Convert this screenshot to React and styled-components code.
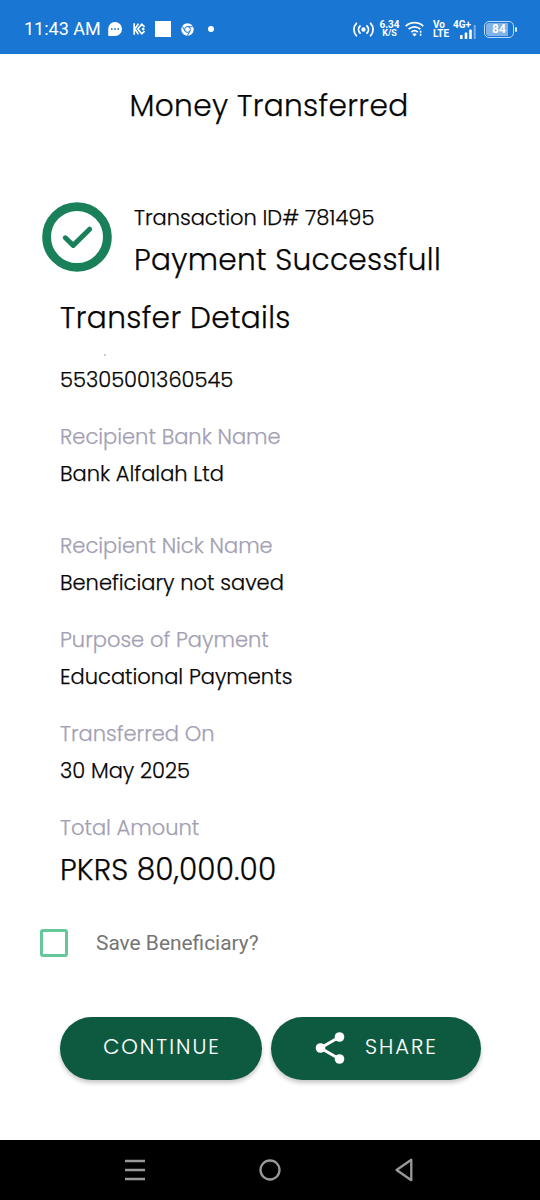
import React from "react";
import styled, { createGlobalStyle } from "styled-components";

const fields = [
  { label: "Recipient Bank Name", value: "Bank Alfalah Ltd", gap: 36 },
  { label: "Recipient Nick Name", value: "Beneficiary not saved", gap: 21 },
  { label: "Purpose of Payment", value: "Educational Payments", gap: 21 },
  { label: "Transferred On", value: "30 May 2025", gap: 21 },
];

const StatusBar = () => (
  <StatusWrapper>
    <StatusLeft>
      <Clock>11:43 AM</Clock>
      <svg width="14" height="14" viewBox="0 0 14 14">
        <path d="M7 0a7 7 0 1 1 0 14H1.2a1 1 0 0 1-1-1V7A7 7 0 0 1 7 0z" fill="#fff" />
        <g fill="#1976d2">
          <circle cx="3.8" cy="7" r="0.9" />
          <circle cx="7" cy="7" r="0.9" />
          <circle cx="10.2" cy="7" r="0.9" />
        </g>
      </svg>
      <svg width="13" height="14" viewBox="0 0 13 14" fill="none" stroke="#fff" strokeWidth="1.7">
        <path d="M1.2 1.2v11.6M5.4 1.6L2.2 6.6M2.2 7.4l3.2 5M11.6 4.8L8.8 2.2 4.8 7l4 4.8 2.8-2.6" />
        <path d="M10.2 5.3L11.9 7l-1.7 1.7L8.5 7z" fill="#fff" stroke="none" />
      </svg>
      <Square />
      <svg width="13" height="13" viewBox="0 0 13 13">
        <circle cx="6.5" cy="6.5" r="6.2" fill="#fff" />
        <circle cx="6.5" cy="6.5" r="2.9" fill="none" stroke="#1976d2" strokeWidth="1" />
        <path d="M6.5 3.6h5.4M4 8L1.3 3.4M9 8l-2.6 4.6" stroke="#1976d2" strokeWidth="0.9" />
      </svg>
      <Bullet />
    </StatusLeft>
    <StatusRight>
      <svg width="21" height="15" viewBox="0 0 21 15" fill="none" stroke="#fff" strokeWidth="1.8" strokeLinecap="round">
        <circle cx="10.5" cy="7.5" r="1.3" fill="#fff" />
        <path d="M7 4a5 5 0 0 0 0 7M14 4a5 5 0 0 1 0 7M3.4 1.3a9 9 0 0 0 0 12.4M17.6 1.3a9 9 0 0 1 0 12.4" />
      </svg>
      <Stacked $left={5} $width={21}>
        <span>6.34</span>
        <small>K/S</small>
      </Stacked>
      <Wifi width="19" height="16" viewBox="0 0 19 16" fill="none" stroke="#fff" strokeWidth="1.8">
        <path d="M0.8 5.1a12.6 12.6 0 0 1 17.4 0M3.6 8.2a8.6 8.6 0 0 1 11.8 0M6.3 11.1a4.8 4.8 0 0 1 6.4 0" />
        <path d="M9.5 15.6l-2.2-2.3a3.2 3.2 0 0 1 4.4 0z" fill="#fff" stroke="none" />
        <path d="M15.6 9.8v5.8" strokeWidth="1.6" strokeDasharray="2 1" />
      </Wifi>
      <Stacked $left={9} $width={16} $align="left">
        <span>Vo</span>
        <span>LTE</span>
      </Stacked>
      <Signal>
        <span>4G+</span>
        <svg width="17" height="15" viewBox="0 0 17 15" fill="#fff">
          <rect x="0" y="11" width="2.6" height="4" rx="0.6" />
          <rect x="4.7" y="8.5" width="2.6" height="6.5" rx="0.6" />
          <rect x="9.2" y="5.5" width="2.6" height="9.5" rx="0.6" />
          <rect x="13.6" y="1" width="2.2" height="14" rx="0.6" opacity="0.4" />
        </svg>
      </Signal>
      <Battery>
        <Charge>84</Charge>
      </Battery>
      <BatteryTip />
    </StatusRight>
  </StatusWrapper>
);

const SuccessIcon = () => (
  <svg width="70" height="70" viewBox="0 0 70 70" fill="none" stroke="#198059">
    <circle cx="35" cy="35" r="30.4" strokeWidth="8.8" />
    <path d="M23.3 35.8l7.9 7.6 16.4-16.2" strokeWidth="5" strokeLinecap="round" strokeLinejoin="round" />
  </svg>
);

const ShareIcon = () => (
  <svg width="30" height="32" viewBox="0 0 30 32">
    <path d="M24.5 5L5.5 16l19 11" fill="none" stroke="#fff" strokeWidth="3" />
    <g fill="#fff">
      <circle cx="24.5" cy="5" r="4.8" />
      <circle cx="5.5" cy="16" r="4.8" />
      <circle cx="24.5" cy="27" r="4.8" />
    </g>
  </svg>
);

const App = () => {
  return (
    <Screen>
      <GlobalStyle />
      <StatusBar />
      <Title>Money Transferred</Title>
      <Result>
        <SuccessIcon />
        <div>
          <TransactionId>Transaction ID# 781495</TransactionId>
          <ResultText>Payment Successfull</ResultText>
        </div>
      </Result>
      <Details>
        <SectionTitle>Transfer Details</SectionTitle>
        <Speck />
        <Account>55305001360545</Account>
        {fields.map(({ label, value, gap }) => (
          <Field key={label} $gap={gap}>
            <Label>{label}</Label>
            <Value>{value}</Value>
          </Field>
        ))}
        <Label>Total Amount</Label>
        <Amount>PKRS 80,000.00</Amount>
      </Details>
      <SaveRow>
        <CheckBox type="checkbox" />
        Save Beneficiary?
      </SaveRow>
      <Actions>
        <PillButton $width={202}>CONTINUE</PillButton>
        <PillButton $width={210}>
          <ShareIcon />
          SHARE
        </PillButton>
      </Actions>
      <NavBar>
        <svg width="20" height="22" viewBox="0 0 20 22" stroke="#999" strokeWidth="2.6">
          <path d="M0 2h20M0 11h20M0 20h20" />
        </svg>
        <svg width="22" height="22" viewBox="0 0 22 22" fill="none" stroke="#999" strokeWidth="2.3">
          <circle cx="11" cy="11" r="9.5" />
        </svg>
        <svg width="18" height="24" viewBox="0 0 18 24" fill="none" stroke="#999" strokeWidth="2.3" strokeLinejoin="round">
          <path d="M16.3 1.8v20.4L1.6 12z" />
        </svg>
      </NavBar>
    </Screen>
  );
};

const GlobalStyle = createGlobalStyle`
  * {
    box-sizing: border-box;
  }

  body {
    margin: 0;
    background: #fff;
  }

  svg {
    display: block;
    flex-shrink: 0;
  }
`;

const Screen = styled.div`
  display: flex;
  flex-direction: column;
  width: 540px;
  height: 1200px;
  background: #fff;
  color: #050505;
  font-family: Poppins, Inter, sans-serif;
  font-size: 21px;
  font-weight: 300;
  white-space: nowrap;
  -webkit-text-stroke: 0.25px;
`;

const StatusWrapper = styled.header`
  display: flex;
  justify-content: space-between;
  height: 54px;
  padding: 4px 24px 0;
  background: #1976d2;
  color: #fff;
  font-family: Roboto, sans-serif;
  font-weight: 400;
  -webkit-text-stroke: 0;
`;

const StatusLeft = styled.div`
  display: flex;
  align-items: center;
`;

const Clock = styled.span`
  width: 84px;
  font-size: 18px;
  line-height: 22px;

  & + svg + svg {
    margin-left: 11px;
  }
`;

const Square = styled.span`
  width: 16px;
  height: 16px;
  margin: 0 10px 0 9px;
  background: #fff;
`;

const Bullet = styled.span`
  width: 6px;
  height: 6px;
  margin-left: 14px;
  border-radius: 50%;
  background: #fff;
`;

const StatusRight = styled.div`
  display: flex;
  align-items: center;
`;

const Stacked = styled.div`
  display: flex;
  flex-direction: column;
  width: ${({ $width }) => $width}px;
  margin-left: ${({ $left }) => $left}px;
  font-size: 10px;
  font-weight: 700;
  line-height: 9.5px;
  text-align: ${({ $align }) => $align || "center"};

  small {
    font-size: 9px;
  }
`;

const Wifi = styled.svg`
  margin-left: 5px;
`;

const Signal = styled.div`
  display: flex;
  flex-direction: column;
  width: 25px;
  height: 19px;
  margin-left: 4px;
  font-size: 10px;
  font-weight: 700;
  line-height: 10px;

  svg {
    margin: -6px 0 0 7px;
  }
`;

const Battery = styled.div`
  width: 30px;
  height: 17px;
  margin-left: 6px;
  padding: 1px;
  border: 1.5px solid #b9dbff;
  border-radius: 5px;
`;

const Charge = styled.div`
  height: 100%;
  border-radius: 3px;
  background: linear-gradient(90deg, #80b3e8 84%, transparent 84%);
  font-size: 12px;
  font-weight: 700;
  line-height: 13px;
  text-align: center;
`;

const BatteryTip = styled.span`
  width: 2px;
  height: 5px;
  margin: 0 -1px 0 1px;
  border-radius: 1px;
  background: #d5e9ff;
`;

const Title = styled.h1`
  margin: 0;
  padding-right: 2px;
  font-size: 29.6px;
  font-weight: 300;
  line-height: 103px;
  letter-spacing: 0.35px;
  text-align: center;
`;

const Result = styled.section`
  display: flex;
  gap: 22px;
  height: 83px;
  margin-top: 45px;
  padding-left: 42px;
`;

const TransactionId = styled.div`
  line-height: 31px;
`;

const ResultText = styled.div`
  font-size: 29.6px;
  line-height: 53px;
  letter-spacing: 0.3px;
`;

const Details = styled.main`
  padding-left: 60px;
`;

const SectionTitle = styled.h2`
  margin: 0;
  font-size: 29.6px;
  font-weight: 300;
  line-height: 66px;
  letter-spacing: 0.35px;
`;

const Speck = styled.div`
  width: 2px;
  height: 2px;
  margin: 3px 0 5px 44px;
  background: #ccc;
`;

const Account = styled.div`
  margin-bottom: 20px;
  line-height: 38px;
`;

const Field = styled.div`
  margin-bottom: ${({ $gap }) => $gap}px;
`;

const Label = styled.div`
  color: #a39fb4;
  line-height: 36px;
`;

const Value = styled.div`
  line-height: 37px;
`;

const Amount = styled.div`
  font-size: 29.6px;
  line-height: 48px;
  letter-spacing: 0.15px;
`;

const SaveRow = styled.label`
  display: flex;
  align-items: center;
  gap: 28px;
  height: 28px;
  margin: 35px 0 0 40px;
  color: #757575;
  font-family: Roboto, sans-serif;
  font-size: 20.9px;
  font-weight: 400;
  -webkit-text-stroke: 0;
`;

const CheckBox = styled.input`
  appearance: none;
  width: 28px;
  height: 28px;
  margin: 0;
  border: 3px solid #66c79b;
  border-radius: 3px;
`;

const Actions = styled.div`
  display: flex;
  gap: 8.5px;
  margin: 60px 0 0 60px;
`;

const PillButton = styled.button`
  display: flex;
  align-items: center;
  justify-content: center;
  gap: 20px;
  width: ${({ $width }) => $width}px;
  height: 63px;
  padding: 0 0 4px 2px;
  border: none;
  border-radius: 32px;
  background: #0e5a40;
  box-shadow: 0 3px 4px rgba(0, 0, 0, 0.22);
  color: #fff;
  font: inherit;
  letter-spacing: 2px;
  -webkit-text-stroke: 0.1px;

  svg {
    margin-top: 3px;
  }
`;

const NavBar = styled.nav`
  display: flex;
  align-items: center;
  justify-content: space-between;
  height: 60px;
  margin-top: auto;
  padding: 0 127px 0 125px;
  background: #000;
`;

export default App;
